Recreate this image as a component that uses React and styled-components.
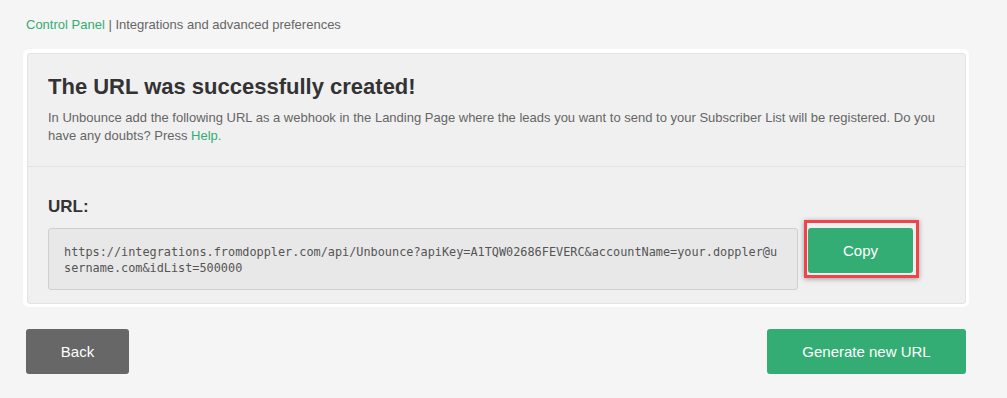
import React from 'react'
import styled, { createGlobalStyle } from 'styled-components'

const GlobalStyle = createGlobalStyle`
  body {
    margin: 0;
    background: #f5f5f5;
    font-family: 'Liberation Sans', Arial, sans-serif;
  }
`

const Page = styled.div`
  width: 946px;
  padding: 16px 0 24px 23px;
`

const Breadcrumb = styled.div`
  font-size: 13px;
  line-height: 18px;
  color: #666;
  padding-left: 3px;
  margin-bottom: 15px;

  a {
    color: #33ad73;
    text-decoration: none;
  }
`

const Card = styled.div`
  background: #fff;
  border-radius: 6px;
  padding: 4px 3px 3px 4px;
`

const Panel = styled.div`
  background: #f0f0f0;
  border: 1px solid #e3e3e3;
  border-radius: 3px;
`

const Section = styled.div`
  padding: ${({ $pad }) => $pad};
  border-bottom: ${({ $divider }) => ($divider ? '1px solid #e3e3e3' : 'none')};
`

const Title = styled.h2`
  margin: 0 0 9px;
  font-size: 22px;
  line-height: 26px;
  font-weight: 700;
  color: #333;
`

const Description = styled.p`
  margin: 0;
  font-size: 13px;
  line-height: 18px;
  color: #666;

  a {
    color: #33ad73;
    text-decoration: none;
  }
`

const Label = styled.div`
  font-size: 17px;
  line-height: 20px;
  font-weight: 700;
  color: #333;
  margin-bottom: 11px;
`

const UrlRow = styled.div`
  display: flex;
  align-items: flex-start;
  gap: 10px;
`

const UrlBox = styled.div`
  width: 750px;
  box-sizing: border-box;
  background: #e8e8e8;
  border: 1px solid #cfcfcf;
  border-radius: 3px;
  padding: 15px 16px 13px 15px;
  font-family: 'DejaVu Sans Mono', monospace;
  font-size: 11.85px;
  line-height: 16px;
  color: #555;
  word-break: break-all;
`

const Button = styled.button`
  box-sizing: border-box;
  height: 45px;
  width: ${({ $width }) => $width};
  border: none;
  border-radius: 3px;
  background: ${({ $variant }) => ($variant === 'grey' ? '#676767' : '#33ad73')};
  color: #fff;
  font-family: 'Liberation Sans', Arial, sans-serif;
  font-size: 15px;
  cursor: pointer;
`

const Highlight = styled.div`
  position: relative;

  &::after {
    content: '';
    position: absolute;
    top: -8px;
    left: -4px;
    right: -6px;
    bottom: -5px;
    border: 3px solid #f0444a;
    box-shadow: 0 1px 5px rgba(0, 0, 0, 0.35);
    pointer-events: none;
  }
`

const Actions = styled.div`
  display: flex;
  justify-content: space-between;
  padding: 0 3px 0 3px;
  margin-top: 22px;
`

const url =
  'https://integrations.fromdoppler.com/api/Unbounce?apiKey=A1TQW02686FEVERC&accountName=your.doppler@username.com&idList=500000'

const App = () => (
  <>
    <GlobalStyle />
    <Page>
      <Breadcrumb>
        <a href="#">Control Panel</a> | Integrations and advanced preferences
      </Breadcrumb>
      <Card>
        <Panel>
          <Section $pad="20px 20px 21px" $divider>
            <Title>The URL was successfully created!</Title>
            <Description>
              In Unbounce add the following URL as a webhook in the Landing Page where the
              leads you want to send to your Subscriber List will be registered. Do you have
              any doubts? Press <a href="#">Help.</a>
            </Description>
          </Section>
          <Section $pad="30px 20px 13px">
            <Label>URL:</Label>
            <UrlRow>
              <UrlBox>{url}</UrlBox>
              <Highlight>
                <Button $width="105px">Copy</Button>
              </Highlight>
            </UrlRow>
          </Section>
        </Panel>
      </Card>
      <Actions>
        <Button $variant="grey" $width="103px">Back</Button>
        <Button $width="199px">Generate new URL</Button>
      </Actions>
    </Page>
  </>
)

export default App
